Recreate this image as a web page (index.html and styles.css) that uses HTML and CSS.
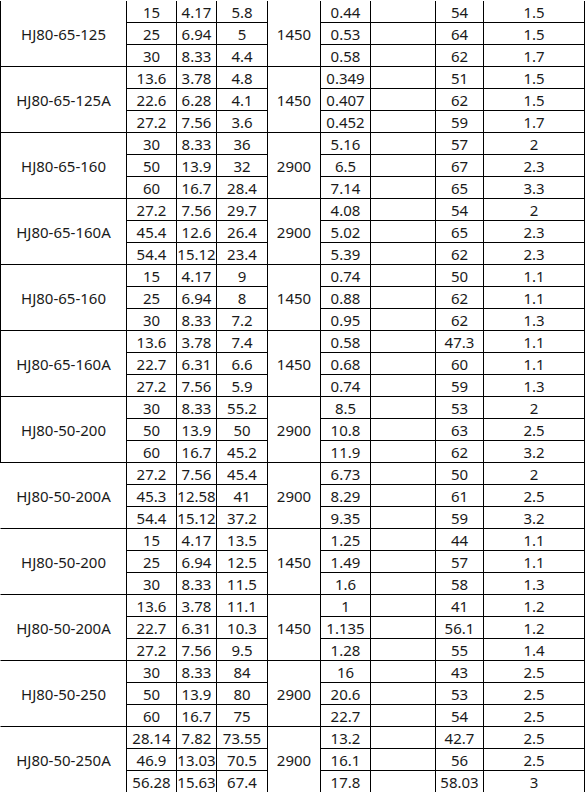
FILE: index.html
```html
<!DOCTYPE html>
<html lang="zh">
<head>
<meta charset="utf-8">
<title>HJ80 泵性能参数</title>
<link rel="stylesheet" href="styles.css">
</head>
<body>
<table class="spec">
  <colgroup>
    <col class="c-model"><col class="c-q1"><col class="c-q2"><col class="c-h"><col class="c-n"><col class="c-p"><col class="c-blank"><col class="c-eff"><col class="c-npsh">
  </colgroup>
  <tbody>
    <tr><td class="model" rowspan="3">HJ80-65-125</td><td>15</td><td>4.17</td><td>5.8</td><td class="speed" rowspan="3">1450</td><td>0.44</td><td></td><td>54</td><td>1.5</td></tr>
    <tr><td>25</td><td>6.94</td><td>5</td><td>0.53</td><td></td><td>64</td><td>1.5</td></tr>
    <tr><td>30</td><td>8.33</td><td>4.4</td><td>0.58</td><td></td><td>62</td><td>1.7</td></tr>

    <tr><td class="model" rowspan="3">HJ80-65-125A</td><td>13.6</td><td>3.78</td><td>4.8</td><td class="speed" rowspan="3">1450</td><td>0.349</td><td></td><td>51</td><td>1.5</td></tr>
    <tr><td>22.6</td><td>6.28</td><td>4.1</td><td>0.407</td><td></td><td>62</td><td>1.5</td></tr>
    <tr><td>27.2</td><td>7.56</td><td>3.6</td><td>0.452</td><td></td><td>59</td><td>1.7</td></tr>

    <tr><td class="model" rowspan="3">HJ80-65-160</td><td>30</td><td>8.33</td><td>36</td><td class="speed" rowspan="3">2900</td><td>5.16</td><td></td><td>57</td><td>2</td></tr>
    <tr><td>50</td><td>13.9</td><td>32</td><td>6.5</td><td></td><td>67</td><td>2.3</td></tr>
    <tr><td>60</td><td>16.7</td><td>28.4</td><td>7.14</td><td></td><td>65</td><td>3.3</td></tr>

    <tr><td class="model" rowspan="3">HJ80-65-160A</td><td>27.2</td><td>7.56</td><td>29.7</td><td class="speed" rowspan="3">2900</td><td>4.08</td><td></td><td>54</td><td>2</td></tr>
    <tr><td>45.4</td><td>12.6</td><td>26.4</td><td>5.02</td><td></td><td>65</td><td>2.3</td></tr>
    <tr><td>54.4</td><td>15.12</td><td>23.4</td><td>5.39</td><td></td><td>62</td><td>2.3</td></tr>

    <tr><td class="model" rowspan="3">HJ80-65-160</td><td>15</td><td>4.17</td><td>9</td><td class="speed" rowspan="3">1450</td><td>0.74</td><td></td><td>50</td><td>1.1</td></tr>
    <tr><td>25</td><td>6.94</td><td>8</td><td>0.88</td><td></td><td>62</td><td>1.1</td></tr>
    <tr><td>30</td><td>8.33</td><td>7.2</td><td>0.95</td><td></td><td>62</td><td>1.3</td></tr>

    <tr><td class="model" rowspan="3">HJ80-65-160A</td><td>13.6</td><td>3.78</td><td>7.4</td><td class="speed" rowspan="3">1450</td><td>0.58</td><td></td><td>47.3</td><td>1.1</td></tr>
    <tr><td>22.7</td><td>6.31</td><td>6.6</td><td>0.68</td><td></td><td>60</td><td>1.1</td></tr>
    <tr><td>27.2</td><td>7.56</td><td>5.9</td><td>0.74</td><td></td><td>59</td><td>1.3</td></tr>

    <tr><td class="model" rowspan="3">HJ80-50-200</td><td>30</td><td>8.33</td><td>55.2</td><td class="speed" rowspan="3">2900</td><td>8.5</td><td></td><td>53</td><td>2</td></tr>
    <tr><td>50</td><td>13.9</td><td>50</td><td>10.8</td><td></td><td>63</td><td>2.5</td></tr>
    <tr><td>60</td><td>16.7</td><td>45.2</td><td>11.9</td><td></td><td>62</td><td>3.2</td></tr>

    <tr><td class="model open" rowspan="3">HJ80-50-200A</td><td>27.2</td><td>7.56</td><td>45.4</td><td class="speed" rowspan="3">2900</td><td>6.73</td><td></td><td>50</td><td>2</td></tr>
    <tr><td>45.3</td><td>12.58</td><td>41</td><td>8.29</td><td></td><td>61</td><td>2.5</td></tr>
    <tr><td>54.4</td><td>15.12</td><td>37.2</td><td>9.35</td><td></td><td>59</td><td>3.2</td></tr>

    <tr><td class="model open" rowspan="3">HJ80-50-200</td><td>15</td><td>4.17</td><td>13.5</td><td class="speed" rowspan="3">1450</td><td>1.25</td><td></td><td>44</td><td>1.1</td></tr>
    <tr><td>25</td><td>6.94</td><td>12.5</td><td>1.49</td><td></td><td>57</td><td>1.1</td></tr>
    <tr><td>30</td><td>8.33</td><td>11.5</td><td>1.6</td><td></td><td>58</td><td>1.3</td></tr>

    <tr><td class="model open" rowspan="3">HJ80-50-200A</td><td>13.6</td><td>3.78</td><td>11.1</td><td class="speed" rowspan="3">1450</td><td>1</td><td></td><td>41</td><td>1.2</td></tr>
    <tr><td>22.7</td><td>6.31</td><td>10.3</td><td>1.135</td><td></td><td>56.1</td><td>1.2</td></tr>
    <tr><td>27.2</td><td>7.56</td><td>9.5</td><td>1.28</td><td></td><td>55</td><td>1.4</td></tr>

    <tr><td class="model open" rowspan="3">HJ80-50-250</td><td>30</td><td>8.33</td><td>84</td><td class="speed" rowspan="3">2900</td><td>16</td><td></td><td>43</td><td>2.5</td></tr>
    <tr><td>50</td><td>13.9</td><td>80</td><td>20.6</td><td></td><td>53</td><td>2.5</td></tr>
    <tr><td>60</td><td>16.7</td><td>75</td><td>22.7</td><td></td><td>54</td><td>2.5</td></tr>

    <tr><td class="model open" rowspan="3">HJ80-50-250A</td><td>28.14</td><td>7.82</td><td>73.55</td><td class="speed" rowspan="3">2900</td><td>13.2</td><td></td><td>42.7</td><td>2.5</td></tr>
    <tr><td>46.9</td><td>13.03</td><td>70.5</td><td>16.1</td><td></td><td>56</td><td>2.5</td></tr>
    <tr><td>56.28</td><td>15.63</td><td>67.4</td><td>17.8</td><td></td><td>58.03</td><td>3</td></tr>
  </tbody>
</table>
</body>
</html>
```

FILE: styles.css
```css
html, body {
  margin: 0;
  padding: 0;
  background: #ffffff;
  overflow: hidden;
}

body {
  padding-top: 1px;
  font-family: "Noto Sans", "Open Sans", "Noto Sans CJK SC", sans-serif;
  font-size: 15px;
  color: #1a1a1a;
}

.spec {
  border-collapse: separate;
  border-spacing: 0;
  table-layout: fixed;
  width: 585px;
}

.c-model { width: 127px; }
.c-q1 { width: 50px; }
.c-q2 { width: 40px; }
.c-h { width: 51px; }
.c-n { width: 53px; }
.c-p { width: 50px; }
.c-blank { width: 65px; }
.c-eff { width: 48px; }
.c-npsh { width: 101px; }

.spec tr {
  height: 22px;
}

.spec td {
  padding: 1px 0 0;
  line-height: 20px;
  text-align: center;
  vertical-align: middle;
  white-space: nowrap;
  overflow: hidden;
  border-right: 1px solid #000;
  border-bottom: 1px solid #000;
}

.spec td.model {
  border-left: 1px solid #000;
}

.spec td.model.open {
  border-left-color: #ffffff;
}
```
